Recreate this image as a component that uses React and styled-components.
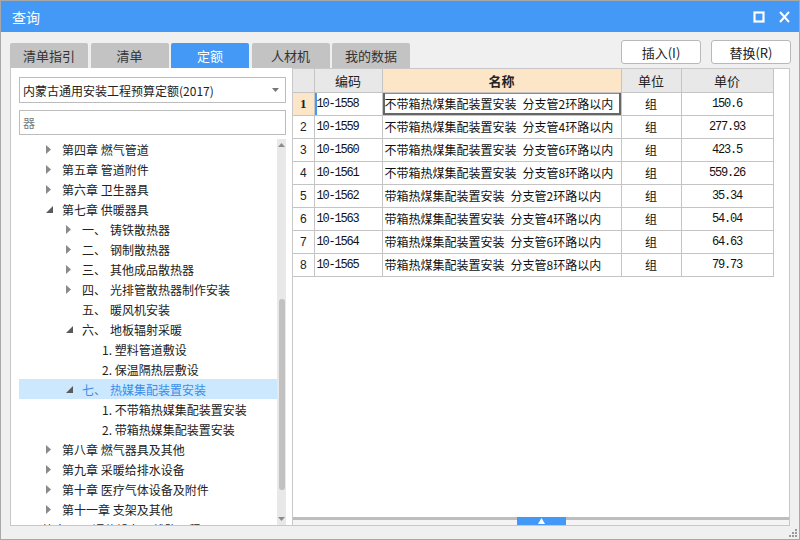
import React from 'react';
import styled, { createGlobalStyle } from 'styled-components';

const BLUE = '#4499f7';

const GlobalStyle = createGlobalStyle`
  html, body { margin: 0; padding: 0; background: #fff; }
  body { font-family: "Noto Sans CJK SC", "Noto Sans", sans-serif; color: #222; }
  * { box-sizing: border-box; }
`;

const tree = [
  { level: 1, state: 'closed', text: '第四章 燃气管道' },
  { level: 1, state: 'closed', text: '第五章 管道附件' },
  { level: 1, state: 'closed', text: '第六章 卫生器具' },
  { level: 1, state: 'open', text: '第七章 供暖器具' },
  { level: 2, state: 'closed', no: '一、', text: '铸铁散热器' },
  { level: 2, state: 'closed', no: '二、', text: '钢制散热器' },
  { level: 2, state: 'closed', no: '三、', text: '其他成品散热器' },
  { level: 2, state: 'closed', no: '四、', text: '光排管散热器制作安装' },
  { level: 2, state: 'leaf', no: '五、', text: '暖风机安装' },
  { level: 2, state: 'open', no: '六、', text: '地板辐射采暖' },
  { level: 3, state: 'leaf', text: '1. 塑料管道敷设' },
  { level: 3, state: 'leaf', text: '2. 保温隔热层敷设' },
  { level: 2, state: 'open', no: '七、', text: '热媒集配装置安装', selected: true },
  { level: 3, state: 'leaf', text: '1. 不带箱热媒集配装置安装' },
  { level: 3, state: 'leaf', text: '2. 带箱热媒集配装置安装' },
  { level: 1, state: 'closed', text: '第八章 燃气器具及其他' },
  { level: 1, state: 'closed', text: '第九章 采暖给排水设备' },
  { level: 1, state: 'closed', text: '第十章 医疗气体设备及附件' },
  { level: 1, state: 'closed', text: '第十一章 支架及其他' },
  { level: 0, state: 'closed', text: '第十一册 通信设备及线路工程' },
];

const rows = [
  ['10-1558', '不带箱热煤集配装置安装\u2002分支管2环路以内', '150.6'],
  ['10-1559', '不带箱热煤集配装置安装\u2002分支管4环路以内', '277.93'],
  ['10-1560', '不带箱热煤集配装置安装\u2002分支管6环路以内', '423.5'],
  ['10-1561', '不带箱热煤集配装置安装\u2002分支管8环路以内', '559.26'],
  ['10-1562', '带箱热煤集配装置安装\u2002分支管2环路以内', '35.34'],
  ['10-1563', '带箱热煤集配装置安装\u2002分支管4环路以内', '54.04'],
  ['10-1564', '带箱热煤集配装置安装\u2002分支管6环路以内', '64.63'],
  ['10-1565', '带箱热煤集配装置安装\u2002分支管8环路以内', '79.73'],
];

const tabs = ['清单指引', '清单', '定额', '人材机', '我的数据'];

export default function App() {
  return (
    <>
      <GlobalStyle />
      <Window>
        <TitleBar>
          <Title>查询</Title>
          <TitleIcons>
            <svg width="12" height="12" viewBox="0 0 12 12">
              <rect x="1.5" y="1.5" width="9" height="9" fill="none" stroke="#fff" strokeWidth="2.2" />
            </svg>
            <svg width="11" height="12" viewBox="0 0 11 12">
              <path d="M1 1 L10 11 M10 1 L1 11" stroke="#fff" strokeWidth="2" />
            </svg>
          </TitleIcons>
        </TitleBar>

        <Toolbar>
          <Tabs>
            {tabs.map((t) => (
              <Tab key={t} $active={t === '定额'}>{t}</Tab>
            ))}
          </Tabs>
          <Buttons>
            <Button>插入(I)</Button>
            <Button>替换(R)</Button>
          </Buttons>
        </Toolbar>

        <Body>
          <LeftPanel>
            <Combo>
              <span>内蒙古通用安装工程预算定额(2017)</span>
              <svg width="7" height="4" viewBox="0 0 7 4">
                <path d="M0 0 L7 0 L3.5 4 Z" fill="#777" />
              </svg>
            </Combo>
            <Search>器</Search>
            <TreeWrap>
              <TreeList>
                {tree.map((t, i) => (
                  <TreeRow key={i} $level={t.level} $selected={t.selected}>
                    <Toggle>
                      {t.state === 'closed' && (
                        <svg width="5" height="9" viewBox="0 0 5 9">
                          <path d="M0 0 L5 4.5 L0 9 Z" fill="#8a8a8a" />
                        </svg>
                      )}
                      {t.state === 'open' && (
                        <svg width="7" height="7" viewBox="0 0 7 7">
                          <path d="M7 0 L7 7 L0 7 Z" fill="#5a5a5a" />
                        </svg>
                      )}
                    </Toggle>
                    {t.no && <NodeNo>{t.no}</NodeNo>}
                    <span>{t.text}</span>
                  </TreeRow>
                ))}
              </TreeList>
              <ScrollBar>
                <ScrollArrow>
                  <svg width="9" height="6" viewBox="0 0 9 6">
                    <path d="M1 5 L4.5 1 L8 5 Z" fill="#8c8c8c" />
                  </svg>
                </ScrollArrow>
                <Thumb />
                <ScrollArrow $bottom>
                  <svg width="9" height="6" viewBox="0 0 9 6">
                    <path d="M1 1 L4.5 5 L8 1 Z" fill="#8c8c8c" />
                  </svg>
                </ScrollArrow>
              </ScrollBar>
            </TreeWrap>
          </LeftPanel>

          <RightPanel>
            <GridArea>
              <Grid>
                <colgroup>
                  <col style={{ width: 21 }} />
                  <col style={{ width: 68 }} />
                  <col style={{ width: 239 }} />
                  <col style={{ width: 60 }} />
                  <col style={{ width: 92 }} />
                </colgroup>
                <thead>
                  <tr>
                    <Head />
                    <Head>编码</Head>
                    <Head $hot>名称</Head>
                    <Head>单位</Head>
                    <Head>单价</Head>
                  </tr>
                </thead>
                <tbody>
                  {rows.map((r, i) => (
                    <tr key={r[0]}>
                      <RowNo $active={i === 0}>{i + 1}</RowNo>
                      <Cell $mono $mark={i === 0}>{r[0]}</Cell>
                      <Cell $current={i === 0}>{r[1]}</Cell>
                      <Cell $center>组</Cell>
                      <Cell $mono $center>{r[2]}</Cell>
                    </tr>
                  ))}
                </tbody>
              </Grid>
            </GridArea>
            <Splitter>
              <SplitHandle>
                <svg width="7" height="6" viewBox="0 0 7 6">
                  <path d="M0 6 L3.5 0 L7 6 Z" fill="#fff" />
                </svg>
              </SplitHandle>
            </Splitter>
          </RightPanel>
        </Body>

        <Footer>
          <svg width="9" height="9" viewBox="0 0 9 9">
            <g fill="#9a9a9a">
              <rect x="6" y="0" width="2" height="2" />
              <rect x="3" y="3" width="2" height="2" />
              <rect x="6" y="3" width="2" height="2" />
              <rect x="0" y="6" width="2" height="2" />
              <rect x="3" y="6" width="2" height="2" />
              <rect x="6" y="6" width="2" height="2" />
            </g>
          </svg>
        </Footer>
      </Window>
    </>
  );
}

const Window = styled.div`
  width: 800px;
  height: 540px;
  border: 1px solid #a8a8a8;
  background: #f0f0f0;
  display: flex;
  flex-direction: column;
  overflow: hidden;
`;

const TitleBar = styled.div`
  height: 31px;
  flex-shrink: 0;
  background: ${BLUE};
  color: #fff;
  display: flex;
  align-items: center;
  justify-content: space-between;
  padding: 0 9px 0 11px;
`;

const Title = styled.div`
  font-size: 14px;
`;

const TitleIcons = styled.div`
  display: flex;
  align-items: center;
  gap: 14px;
`;

const Toolbar = styled.div`
  height: 36px;
  flex-shrink: 0;
  display: flex;
  justify-content: space-between;
  padding: 0 8px 0 9px;
`;

const Tabs = styled.div`
  display: flex;
  align-items: flex-end;
  gap: 2.5px;
`;

const Tab = styled.div`
  width: 78px;
  height: 25px;
  border-radius: 2px 2px 0 0;
  background: ${(p) => (p.$active ? BLUE : '#c3c3c3')};
  color: ${(p) => (p.$active ? '#fff' : '#333')};
  font-size: 13px;
  display: flex;
  align-items: center;
  justify-content: center;
`;

const Buttons = styled.div`
  display: flex;
  gap: 10px;
  padding-top: 8px;
`;

const Button = styled.div`
  width: 80px;
  height: 24px;
  background: #fff;
  border: 1px solid #b9b9b9;
  border-radius: 3px;
  font-size: 13px;
  color: #222;
  display: flex;
  align-items: center;
  justify-content: center;
`;

const Body = styled.div`
  height: 458px;
  flex-shrink: 0;
  display: flex;
  padding: 0 8px 0 9px;
`;

const LeftPanel = styled.div`
  width: 282px;
  background: #fff;
  border-left: 1px solid #c8c8c8;
  border-bottom: 1px solid #c8c8c8;
  padding: 9px 6px 0 8px;
  display: flex;
  flex-direction: column;
`;

const Combo = styled.div`
  height: 26px;
  border: 1px solid #bcbcbc;
  display: flex;
  align-items: center;
  justify-content: space-between;
  padding: 0 6px 0 3px;
  font-size: 12px;
  color: #222;
`;

const Search = styled.div`
  margin-top: 7px;
  height: 25px;
  border: 1px solid #bcbcbc;
  display: flex;
  align-items: center;
  padding-left: 3px;
  font-size: 12px;
  color: #7a7a7a;
`;

const TreeWrap = styled.div`
  margin-top: 4px;
  flex: 1;
  min-height: 0;
  display: flex;
  overflow: hidden;
`;

const TreeList = styled.div`
  flex: 1;
  min-width: 0;
`;

const TreeRow = styled.div`
  height: 20px;
  display: flex;
  align-items: center;
  white-space: nowrap;
  font-size: 12px;
  padding-left: ${(p) => 7 + p.$level * 20}px;
  background: ${(p) => (p.$selected ? '#cce8ff' : 'transparent')};
  color: ${(p) => (p.$selected ? '#3a8de6' : '#222')};
`;

const Toggle = styled.span`
  width: 16px;
  height: 20px;
  flex-shrink: 0;
  display: flex;
  align-items: center;
`;

const NodeNo = styled.span`
  width: 28px;
  flex-shrink: 0;
`;

const ScrollBar = styled.div`
  width: 9px;
  flex-shrink: 0;
  background: #e8e8e8;
  display: flex;
  flex-direction: column;
  align-items: center;
`;

const ScrollArrow = styled.div`
  height: 9px;
  display: flex;
  align-items: center;
  margin-top: ${(p) => (p.$bottom ? 'auto' : '1px')};
  margin-bottom: ${(p) => (p.$bottom ? '2px' : '0')};
`;

const Thumb = styled.div`
  margin-top: 150px;
  width: 6px;
  height: 191px;
  border-radius: 3px;
  background: #c1c1c1;
`;

const RightPanel = styled.div`
  width: 498px;
  background: #fff;
  border: 1px solid #c8c8c8;
  display: flex;
  flex-direction: column;
`;

const GridArea = styled.div`
  flex: 1;
  min-height: 0;
`;

const Grid = styled.table`
  width: 480px;
  table-layout: fixed;
  border-collapse: collapse;
  font-size: 12px;

  tr { height: 23px; }
  td:first-child, th:first-child { border-left: none; }
  th { border-top: none; }
`;

const Head = styled.th`
  padding: 0;
  font-size: 13px;
  font-weight: ${(p) => (p.$hot ? 700 : 400)};
  color: #222;
  background: ${(p) => (p.$hot ? '#fde6c8' : '#e8e8e8')};
  border: 1px solid #c4c4c4;
  text-align: center;
`;

const RowNo = styled.td`
  padding: 0;
  text-align: center;
  border: 1px solid #c4c4c4;
  background: ${(p) => (p.$active ? '#fde6c8' : '#fff')};
  font-family: ${(p) => (p.$active ? '"Liberation Serif", serif' : '"Liberation Sans", sans-serif')};
  font-weight: ${(p) => (p.$active ? 700 : 400)};
  font-size: ${(p) => (p.$active ? '13px' : '12px')};
  color: #222;
`;

const Cell = styled.td`
  padding: 0 2px;
  border: 1px solid #c4c4c4;
  white-space: nowrap;
  overflow: hidden;
  color: #111;
  text-align: ${(p) => (p.$center ? 'center' : 'left')};
  font-family: ${(p) => (p.$mono ? '"Liberation Mono", monospace' : '"Noto Sans CJK SC", sans-serif')};
  font-size: 12px;
  letter-spacing: ${(p) => (p.$mono ? '-1.2px' : '0')};
  box-shadow: ${(p) =>
    p.$current
      ? `inset 2px 0 0 #666, inset -2px 0 0 #666, inset 0 -2px 0 #666, inset 0 1px 0 ${BLUE}`
      : p.$mark
      ? `inset 2px 0 0 ${BLUE}`
      : 'none'};
`;

const Splitter = styled.div`
  height: 8px;
  flex-shrink: 0;
  border-top: 3px solid #bdbdbd;
  background: #f4f4f4;
  display: flex;
  justify-content: center;
`;

const SplitHandle = styled.div`
  width: 49px;
  height: 8px;
  margin-top: -3px;
  background: ${BLUE};
  display: flex;
  align-items: center;
  justify-content: center;
`;

const Footer = styled.div`
  flex: 1;
  display: flex;
  justify-content: flex-end;
  align-items: flex-end;
  padding: 0 1px 1px 0;
`;
